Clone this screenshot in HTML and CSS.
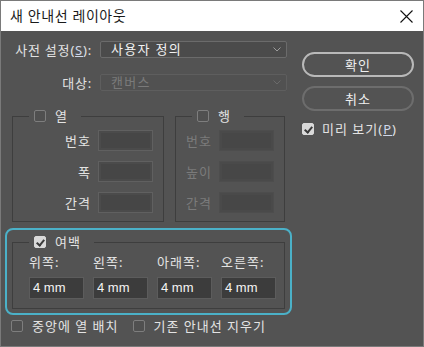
FILE: index.html
```html
<!DOCTYPE html>
<html lang="ko">
<head>
  <meta charset="UTF-8">
  <meta name="viewport" content="width=device-width, initial-scale=1.0">
  <title>새 안내선 레이아웃</title>
  <link rel="stylesheet" href="styles.css">
</head>
<body>
  <div class="dialog">
    <div class="titlebar">
      <span class="title">새 안내선 레이아웃</span>
      <svg class="close" width="13" height="13" viewBox="0 0 13 13">
        <path d="M0.5 0.5L12.5 12.5M12.5 0.5L0.5 12.5" stroke="#111" stroke-width="1.1" fill="none"/>
      </svg>
    </div>

    <div class="content">
      <div class="main">
        <div class="form-row">
          <span class="row-label">사전 설정(<u class="key">S</u>):</span>
          <div class="select">
            <span>사용자 정의</span>
            <svg class="chevron" width="8" height="5" viewBox="0 0 8 5"><path d="M0.5 0.5L4 4L7.5 0.5" stroke="#9c9c9c" fill="none"/></svg>
          </div>
        </div>
        <div class="form-row second">
          <span class="row-label">대상:</span>
          <div class="select disabled">
            <span>캔버스</span>
            <svg class="chevron" width="8" height="5" viewBox="0 0 8 5"><path d="M0.5 0.5L4 4L7.5 0.5" stroke="#6a6a6a" fill="none"/></svg>
          </div>
        </div>

        <div class="groups">
          <fieldset class="group col-group">
            <legend><span class="legend-inner"><span class="check"></span><span>열</span></span></legend>
            <div class="field"><span>번호</span><span class="input"></span></div>
            <div class="field"><span>폭</span><span class="input"></span></div>
            <div class="field"><span>간격</span><span class="input"></span></div>
          </fieldset>
          <fieldset class="group row-group disabled">
            <legend><span class="legend-inner"><span class="check"></span><span>행</span></span></legend>
            <div class="field"><span>번호</span><span class="input"></span></div>
            <div class="field"><span>높이</span><span class="input"></span></div>
            <div class="field"><span>간격</span><span class="input"></span></div>
          </fieldset>
        </div>

        <div class="margin-focus">
          <fieldset class="group margin-group">
            <legend><span class="legend-inner"><span class="check on"></span><span>여백</span></span></legend>
            <div class="margin-grid">
              <span>위쪽:</span>
              <span>왼쪽:</span>
              <span>아래쪽:</span>
              <span>오른쪽:</span>
              <span class="value">4 mm</span>
              <span class="value">4 mm</span>
              <span class="value">4 mm</span>
              <span class="value">4 mm</span>
            </div>
          </fieldset>
        </div>

        <div class="options">
          <span class="option"><span class="check"></span><span>중앙에 열 배치</span></span>
          <span class="option"><span class="check"></span><span>기존 안내선 지우기</span></span>
        </div>
      </div>

      <div class="side">
        <button class="btn primary">확인</button>
        <button class="btn">취소</button>
        <span class="option preview"><span class="check on"></span><span>미리 보기(<u class="key">P</u>)</span></span>
      </div>
    </div>
  </div>
</body>
</html>
```

FILE: styles.css
```css
* {
  box-sizing: border-box;
}
body {
  margin: 0;
  background: #535353;
  font-family: "Noto Sans", "Noto Sans CJK KR", sans-serif;
  font-size: 13px;
  letter-spacing: 1px;
  color: #e3e3e3;
}
.dialog {
  width: 424px;
  height: 347px;
  border: 1px solid #7a7a7a;
  background: #535353;
  display: flex;
  flex-direction: column;
}
.titlebar {
  height: 30px;
  flex: none;
  background: #fff;
  display: flex;
  align-items: center;
  justify-content: space-between;
  padding: 0 10px 0 9px;
}
.title {
  color: #1a1a1a;
  font-size: 14px;
  letter-spacing: 0.6px;
  line-height: 16px;
}
.close {
  display: block;
}
.content {
  display: flex;
  padding-top: 10px;
}
.main {
  width: 290px;
  flex: none;
}
.form-row {
  display: flex;
  align-items: center;
  height: 17px;
}
.form-row.second {
  margin-top: 16px;
}
.row-label {
  width: 91px;
  text-align: right;
  line-height: 16px;
  letter-spacing: 0.8px;
}
.key {
  text-decoration: underline;
  color: #cfd8ea;
}
.select {
  margin-left: 8px;
  width: 187px;
  height: 17px;
  border: 1px solid #6b6b6b;
  border-radius: 2px;
  background: #4b4b4b;
  display: flex;
  align-items: center;
  justify-content: space-between;
  padding: 0 5px 0 10px;
  color: #f2f2f2;
  line-height: 15px;
  letter-spacing: 1.3px;
}
.select.disabled {
  border-color: #5e5e5e;
  background: #515151;
  color: #7a7a7a;
}
.chevron {
  display: block;
}
.groups {
  display: flex;
  gap: 11px;
  padding-left: 11px;
  margin-top: 18px;
}
.group {
  margin: 0;
  min-width: 0;
  border: 1px solid #3e3e3e;
  padding: 0 10px 8px 0;
}
.group legend {
  margin-left: 16px;
  padding: 0 13px 0 5px;
  height: 14px;
}
.legend-inner {
  display: flex;
  align-items: center;
  gap: 9px;
  line-height: 14px;
}
.col-group {
  width: 152px;
}
.row-group {
  width: 110px;
}
.field {
  display: flex;
  justify-content: flex-end;
  align-items: center;
  gap: 7px;
  margin-top: 10px;
  line-height: 16px;
}
.field:first-of-type {
  margin-top: 7px;
}
.input {
  width: 55px;
  height: 21px;
  border: 1px solid #606060;
  background: #464646;
  box-shadow: inset 0 0 0 2px #4b4b4b;
}
.disabled .field {
  color: #7b7b7b;
}
.disabled .input {
  border-color: #4d4d4d;
  background: #474747;
  box-shadow: inset 0 0 0 2px #4a4a4a;
}
.check {
  width: 12px;
  height: 12px;
  flex: none;
  border: 1px solid #7e7e7e;
  border-radius: 2px;
  background: #505050;
  display: inline-block;
  position: relative;
}
.check.on {
  background: #d9d9d9;
  border-color: #d9d9d9;
}
.check.on::after {
  content: "";
  position: absolute;
  left: 3px;
  top: 1px;
  width: 3px;
  height: 6px;
  border: solid #3a3a3a;
  border-width: 0 2px 2px 0;
  transform: rotate(40deg);
}
.margin-focus {
  width: 287px;
  margin: 6px 0 0 4px;
  border: 2px solid #4bb1c8;
  border-radius: 8px;
  padding: 5px 5px 4px 5px;
}
.margin-group {
  width: 273px;
  padding: 0 0 9px 0;
}
.margin-grid {
  display: grid;
  grid-template-columns: repeat(4, 55px);
  column-gap: 9px;
  row-gap: 7px;
  padding-left: 16px;
  margin-top: 5px;
  line-height: 16px;
}
.value {
  height: 22px;
  border: 1px solid #5c5c5c;
  background: #3c3c3c;
  color: #f4f4f4;
  font-family: "Liberation Sans", Arial, sans-serif;
  font-size: 13px;
  letter-spacing: 0;
  line-height: 20px;
  padding-left: 3px;
}
.options {
  display: flex;
  gap: 14px;
  padding-left: 10px;
  margin-top: 3px;
}
.option {
  display: inline-flex;
  align-items: center;
  gap: 9px;
  line-height: 16px;
}
.side {
  width: 112px;
  margin-left: 11px;
  padding-top: 11px;
  display: flex;
  flex-direction: column;
}
.btn {
  height: 25px;
  border: 2px solid #6d6d6d;
  border-radius: 13px;
  background: transparent;
  color: #f0f0f0;
  font-family: inherit;
  font-size: 13px;
  letter-spacing: 1px;
  padding: 0;
  margin-top: 9px;
}
.btn.primary {
  border-color: #b9b9b9;
  margin-top: 0;
}
.preview {
  margin-top: 10px;
  gap: 8px;
}
```
